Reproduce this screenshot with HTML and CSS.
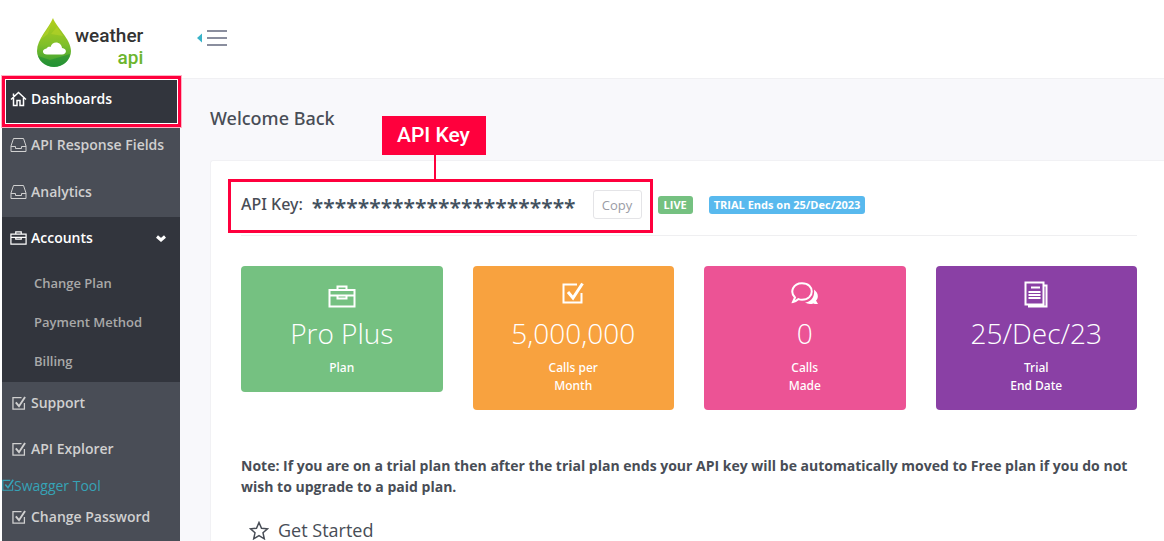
FILE: index.html
```html
<!DOCTYPE html>
<html lang="en">
<head>
<meta charset="utf-8">
<title>Weather API - Dashboard</title>
<link rel="stylesheet" href="styles.css">
</head>
<body>
<svg class="sprite" aria-hidden="true">
  <symbol id="i-home" viewBox="0 0 17 16"><path d="M1 8.500 8.500 1.500 16 8.500M3.500 7v7.500h3.500v-5h3v5h3.500V7M3.500 5V2.500" /></symbol>
  <symbol id="i-inbox" viewBox="0 0 17 16"><path d="M1 9 3.500 1.500h10L16 9v5.500H1zM1 9.500h4.500v2h6v-2H16" /></symbol>
  <symbol id="i-case" viewBox="0 0 28 23"><path d="M1.500 5h25v16.500h-25zM1.500 10.500h25M9.500 5V1.500h9V5M9.500 10.500v3h9v-3" /></symbol>
  <symbol id="i-check" viewBox="0 0 22 22"><path d="M15 2.500H1.500V20.500H19.500V11" /><path class="mark" d="M6 10l5 6L20.500 1.500"/></symbol>
  <symbol id="i-chat" viewBox="0 0 27 23"><path d="M2 20 4 15.500C-1.500 10 2 1.200 11 1.200c13 0 13 16.500 0 16.500-1.500 0-2.500-.2-3.500-.6C6 18.500 4 19.800 2 20z"/><path class="solid" d="M23 7.500c5 4 4.500 8.500 2 11L27 22c-2 .3-3.500 0-4.500-.6-3 1-6 .8-8.500-.8 6-.7 10-5.500 9-13.100z"/></symbol>
  <symbol id="i-docs" viewBox="0 0 24 27"><path d="M1.500 1.500h18v22h-18zM20 4.500h2.500v21H5V24"/><path d="M7 6.500h9M4.500 11h12M4.500 14h12M4.500 17h12"/></symbol>
</svg>

<header class="topbar">
  <a class="logo" href="#" aria-label="Weather API">
    <svg class="drop" viewBox="0 0 34 49" aria-hidden="true">
      <defs><linearGradient id="g" x1="0" y1="0" x2="0" y2="1"><stop offset="0" stop-color="#b5cf1c"/><stop offset=".55" stop-color="#7fbf2a"/><stop offset="1" stop-color="#2f9c35"/></linearGradient></defs>
      <path fill="url(#g)" d="M16 0C19 9 34 21 34 33a17 16 0 0 1-34 0C0 21 12 10 16 0z"/>
      <path fill="#c6d92a" opacity=".4" d="M16 0 11 16 3 22C7 15 14 8 16 0zM14 16l12 2-6-9z"/>
      <path fill="#128237" opacity=".45" d="M1 38l12 4 20-6c-2 16-27 17-32 2z"/>
      <path fill="#fff" d="M10 36.500c-5 0-5.500-5.500-.5-6 1-2 3-2 4-1.500 2-7 11-5.500 11.500 1 5.500.5 5 6.500 0 6.500z"/>
    </svg>
    <span class="wordmark"><span>weather</span><span class="api">api</span></span>
  </a>
  <button class="toggle" type="button" aria-label="Toggle menu">
    <svg viewBox="0 0 30 18" aria-hidden="true"><path fill="#39b3c9" d="M5 4.500v9L0 9z"/><path stroke="#8a8e9e" stroke-width="2" d="M10 2h20M10 9h20M10 16h20"/></svg>
  </button>
</header>

<div class="layout">
  <nav class="sidebar">
    <a class="item current" href="#"><svg class="ico home"><use href="#i-home"/></svg>Dashboards</a>
    <a class="item" href="#"><svg class="ico"><use href="#i-inbox"/></svg>API Response Fields</a>
    <a class="item" href="#"><svg class="ico"><use href="#i-inbox"/></svg>Analytics</a>
    <div class="group">
      <a class="item open" href="#"><svg class="ico bold"><use href="#i-case"/></svg>Accounts<svg class="chevron" viewBox="0 0 10 7" aria-hidden="true"><path d="M1 1.500 5 5 9 1.500"/></svg></a>
      <a class="sub" href="#">Change Plan</a>
      <a class="sub" href="#">Payment Method</a>
      <a class="sub" href="#">Billing</a>
    </div>
    <a class="item short" href="#"><svg class="ico check"><use href="#i-check"/></svg>Support</a>
    <a class="item short" href="#"><svg class="ico check"><use href="#i-check"/></svg>API Explorer</a>
    <a class="plain" href="#"><svg class="ico check"><use href="#i-check"/></svg>Swagger Tool</a>
    <a class="item short" href="#"><svg class="ico check"><use href="#i-check"/></svg>Change Password</a>
  </nav>

  <main class="content">
    <h1 class="welcome">Welcome Back</h1>
    <section class="panel">
      <div class="keyrow">
        <div class="key">
          <span class="keylabel">API Key:</span>
          <span class="stars">***********************</span>
          <button class="copy" type="button">Copy</button>
          <span class="frame"></span>
          <span class="callout">API Key</span>
        </div>
        <span class="badge live">LIVE</span>
        <span class="badge trial">TRIAL Ends on 25/Dec/2023</span>
      </div>
      <div class="cards">
        <article class="card green"><div class="pic"><svg class="case"><use href="#i-case"/></svg></div><div class="num">Pro Plus</div><div class="cap">Plan</div></article>
        <article class="card orange"><div class="pic"><svg class="tick"><use href="#i-check"/></svg></div><div class="num">5,000,000</div><div class="cap">Calls per<br>Month</div></article>
        <article class="card pink"><div class="pic"><svg class="chat"><use href="#i-chat"/></svg></div><div class="num">0</div><div class="cap">Calls<br>Made</div></article>
        <article class="card purple"><div class="pic"><svg class="docs"><use href="#i-docs"/></svg></div><div class="num">25/Dec/23</div><div class="cap">Trial<br>End Date</div></article>
      </div>
      <p class="note">Note: If you are on a trial plan then after the trial plan ends your API key will be automatically moved to Free plan if you do not wish to upgrade to a paid plan.</p>
      <h2 class="start"><svg viewBox="0 0 20 19" aria-hidden="true"><path d="M10 1.500l2.500 5.700 6 .6-4.500 4 1.300 6L10 14.700 4.700 17.800l1.300-6-4.500-4 6-.6z"/></svg>Get Started</h2>
    </section>
  </main>
</div>
</body>
</html>
```

FILE: styles.css
```css
* { box-sizing: border-box; }
html, body { height: 100%; }
body {
  margin: 0;
  display: flex;
  flex-direction: column;
  overflow: hidden;
  background: #fff;
  color: #484d56;
  font: 14px/21px "Open Sans", "Noto Sans", sans-serif;
}
a { text-decoration: none; }
svg { fill: none; stroke: currentColor; flex: none; }
.sprite { position: absolute; width: 0; height: 0; }
.solid { fill: currentColor; stroke: none; }
.mark { stroke-width: 3; }

.topbar { flex: none; display: flex; align-items: flex-start; height: 78px; padding: 18px 0 0 37px; }
.logo { display: flex; width: 160px; color: #333; }
.drop { width: 34px; height: 49px; stroke: none; }
.wordmark { display: flex; flex-direction: column; padding: 7px 0 0 4px; font: 500 19px/22px Roboto, sans-serif; }
.api { align-self: flex-end; color: #6cb52d; }
.toggle { margin-top: 11px; padding: 0; border: 0; background: none; }
.toggle svg { display: block; width: 30px; height: 18px; stroke: none; }

.layout { flex: 1; display: flex; min-height: 0; }
.sidebar { flex: none; width: 180px; border-left: 2px solid #fff; background: #494d56; position: relative; overflow: clip; overflow-clip-margin: 8px; }
.item {
  display: flex; align-items: center; height: 47px; padding: 0 14px 4px 8px;
  color: #d0d0d0; font-weight: 600; line-height: 22px;
}
.ico { width: 17px; height: 16px; margin-right: 4px; }
.ico.home { stroke-width: 1.5; }
.ico.bold { width: 17px; height: 14px; stroke-width: 2; }
.ico.check { width: 14px; height: 14px; margin: 0 5px 0 2px; stroke-width: 2; }
.current { position: relative; height: 45px; padding-bottom: 3px; background: #32353d; color: #fff; }
.current::after {
  content: ""; position: absolute; inset: -2px -1px -4px 0;
  border: 3px solid #ff003d; outline: 1px solid #ffb3c5; box-shadow: inset 0 0 0 1px #fff;
}
.group { background: #32353d; padding-bottom: 1px; }
.open { padding-bottom: 5px; color: #fff; }
.short { height: 46px; }
.chevron { width: 10px; height: 7px; margin-left: auto; stroke-width: 3; }
.sub { display: block; padding: 9px 0 9px 32px; color: #a9a9a9; font-size: 13px; font-weight: 600; line-height: 21px; }
.plain { display: flex; align-items: center; height: 22px; color: #36a3b6; }
.plain .ico.check { width: 12px; height: 12px; margin: 0; }

.content { flex: 1; min-width: 0; padding: 27px 0 0 30px; background: #f8f8fb; border-top: 1px solid #f0f0f3; }
.welcome { margin: 0 0 30px; font: 500 18px/24px "Noto Sans", sans-serif; }
.panel { height: 100%; padding: 18px 27px 0 30px; background: #fff; border: 1px solid #f1f1f4; border-right: 0; border-top-left-radius: 3px; }
.keyrow { display: flex; align-items: center; height: 57px; padding-bottom: 5px; border-bottom: 1px solid #efeff1; }
.key { position: relative; display: flex; align-items: center; }
.keylabel { padding-bottom: 2px; font: 500 16px/22px "Noto Sans", sans-serif; }
.stars { margin: 0 17px 0 9px; padding-top: 4px; color: #44525f; font: 600 21px/20px "Noto Sans", sans-serif; }
.copy { min-width: 49px; height: 29px; padding: 0 8px; border: 1px solid #e4e4e7; border-radius: 3px; background: #fff; color: #9a9ca5; font: 13px/20px "Open Sans", sans-serif; }
.frame { position: absolute; inset: -11px -11px -14px -13px; border: 3px solid #ff003d; }
.callout {
  position: absolute; bottom: 64px; left: 141px; padding: 0 16px 0 15px;
  background: #ff003d; color: #fff; font: 500 21px/39px Roboto, sans-serif; white-space: nowrap;
}
.callout::after { content: ""; position: absolute; top: 100%; left: 50%; width: 2px; height: 26px; background: #ff003d; }
.badge { padding: 0 6px; border-radius: 3px; color: #fff; font-size: 11px; font-weight: 700; line-height: 18px; }
.live { margin-left: 16px; background: #75c181; }
.trial { margin-left: 16px; padding: 0 5px; background: #58b9ee; }

.cards { display: grid; grid-template-columns: repeat(4, 1fr); align-items: start; gap: 30px; margin-top: 30px; }
.card { padding: 10px 10px 15px; border-radius: 4px; color: #fff; text-align: center; }
.green { background: #75c181; }
.orange { background: #f8a23f; }
.pink { background: #ec5395; }
.purple { background: #8a40a5; }
.pic { display: flex; align-items: center; justify-content: center; height: 36px; }
.pic svg { stroke-width: 2; }
.case { width: 28px; height: 23px; margin-top: 4px; }
.tick { width: 22px; height: 22px; margin-bottom: 2px; }
.chat { width: 27px; height: 23px; margin-bottom: 2px; }
.docs { width: 24px; height: 27px; }
.num { font-size: 28px; font-weight: 300; line-height: 42px; }
.cap { padding-top: 5px; font: 500 12px/18px "Noto Sans", sans-serif; }

.note { margin: 45px 0 21px; font-weight: 700; line-height: 21px; }
.start { display: flex; align-items: center; gap: 9px; margin: 0; padding-left: 8px; font-size: 18px; font-weight: 400; line-height: 24px; }
.start svg { width: 20px; height: 19px; stroke-width: 1.5; }
```
